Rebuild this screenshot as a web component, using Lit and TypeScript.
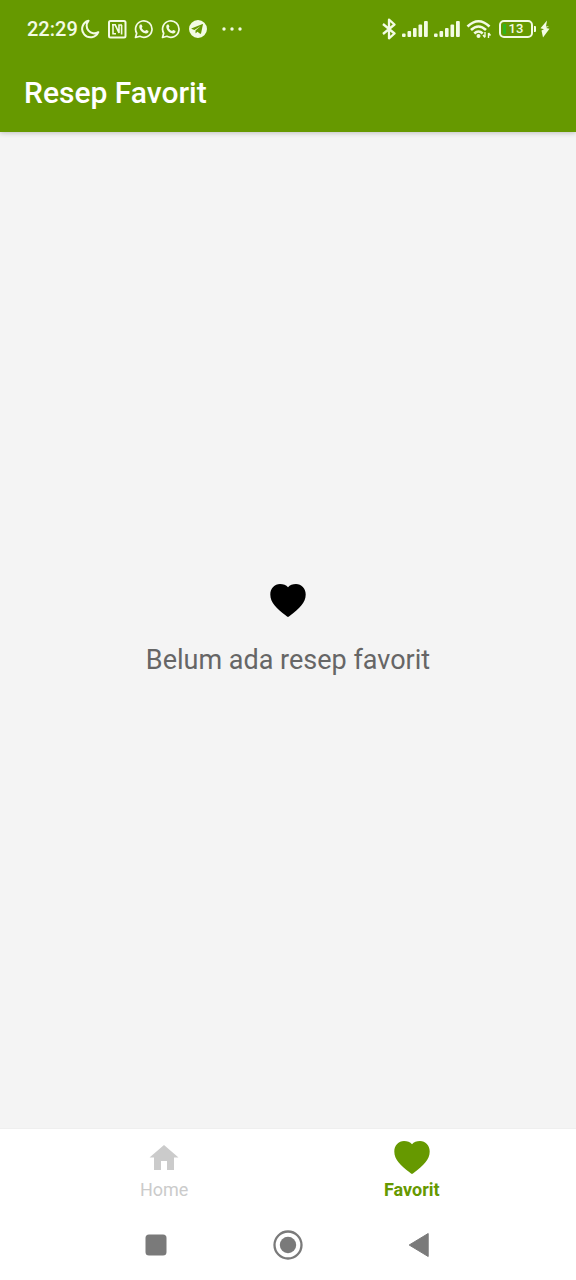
import { LitElement, html, css, svg } from "lit";
import { customElement, state } from "lit/decorators.js";

const heart = svg`<path d="M18 33C17.400 32.800 16.900 32.400 15.500 31.200C6.500 24.500 0.300 18.300 0.300 10.400C0.300 4.400 4.700 0 10 0C13.300 0 16.200 1 18 3.200C19.800 1 22.700 0 26 0C31.300 0 35.700 4.400 35.700 10.400C35.700 18.300 29.500 24.500 20.500 31.200C19.100 32.400 18.600 32.800 18 33Z" />`;

const whatsapp = html`<svg class="ico" width="20" height="20" viewBox="0 0 20 20" aria-label="WhatsApp">
  <path d="M1.500 18.500L2.700 14.200A8.200 8.200 0 1 1 5.900 17.300Z" fill="none" stroke="currentColor" stroke-width="1.700" stroke-linejoin="round" />
  <path d="M7 5.400C7.400 5.400 7.600 5.500 7.800 6L8.400 7.500C8.500 7.900 8.300 8.200 7.700 8.900C8.500 10.500 9.600 11.400 11.100 12C11.900 11 12.100 10.800 12.400 10.900L14.200 11.800C14.700 12.100 14.500 13 14.200 13.500C13.600 14.400 12.200 14.700 11 14.300C8.600 13.600 6.800 11.900 5.800 9.900C5 8.300 5.100 6.500 6.300 5.600C6.500 5.400 6.800 5.400 7 5.400Z" />
</svg>`;

const signal = html`<svg class="ico" width="26" height="18" viewBox="0 0 26 18" aria-label="Signal">
  <rect x="0" y="13.500" width="3.600" height="3.500" rx="1" />
  <rect x="5.500" y="11" width="3.600" height="6" rx="1" />
  <rect x="11" y="8" width="3.600" height="9" rx="1" />
  <rect x="16.500" y="4.500" width="3.600" height="12.500" rx="1" />
  <rect x="22" y="1" width="3.800" height="16" rx="1" />
</svg>`;

@customElement("status-bar")
class StatusBar extends LitElement {
  static styles = css`
    :host {
      display: flex;
      justify-content: space-between;
      align-items: center;
      height: 58px;
      padding: 0 26px 0 27px;
      color: #f3fbe4;
      font: 500 20px/24px Roboto, sans-serif;
    }
    .group { display: flex; align-items: center; gap: 7px; }
    .right { gap: 6px; }
    .clock { display: flex; align-items: center; gap: 2px; }
    .more { margin-left: 7px; }
    .ico { display: block; fill: currentColor; flex: none; }
    .power { display: flex; align-items: center; gap: 4px; }
    .battery {
      box-sizing: border-box;
      width: 34px;
      height: 18px;
      border: 2px solid currentColor;
      border-radius: 5px;
      background: linear-gradient(#2fb51c, #2fb51c) 2px 2px / 3px 10px no-repeat;
      font-size: 13px;
      line-height: 14px;
      text-align: center;
    }
    .cell { display: flex; align-items: center; }
    .cap { width: 2px; height: 6px; margin-left: 1px; border-radius: 0 1px 1px 0; background: currentColor; }
  `;

  render() {
    return html`
      <div class="group">
        <div class="clock">
          <span>22:29</span>
          <svg class="ico" width="20" height="20" viewBox="0 0 20 20" aria-label="Do not disturb">
            <path d="M8.500 1.800A8.400 8.400 0 1 0 18.300 13.200A7.600 7.600 0 0 1 8.500 1.800Z" fill="none" stroke="currentColor" stroke-width="2" stroke-linejoin="round" />
          </svg>
        </div>
        <svg class="ico" width="20" height="20" viewBox="0 0 20 20" aria-label="NFC">
          <rect x="2" y="2" width="16.500" height="16.500" rx="1.500" fill="none" stroke="currentColor" stroke-width="2" />
          <path d="M5 5.800H8.200L12 14V6H15M6 5.800V14.700H9M14.600 6V15.500" fill="none" stroke="currentColor" stroke-width="1.600" />
        </svg>
        ${whatsapp}${whatsapp}
        <svg class="ico" width="20" height="20" viewBox="0 0 20 20" aria-label="Telegram">
          <path fill-rule="evenodd" d="M10 1A9 9 0 1 0 10 19A9 9 0 0 0 10 1ZM14.900 5.500L13.100 14.300C13 14.900 12.600 15 12.100 14.700L9.400 12.700L8.100 14C7.800 14.300 7.500 14.200 7.500 13.800V11.400L12.700 6.900L6.400 10.900L3.800 10.100C3.300 9.900 3.300 9.500 3.900 9.200L14 5.200C14.500 5 15 5 14.900 5.500Z" />
        </svg>
        <svg class="ico more" width="20" height="4" viewBox="0 0 20 4" aria-label="More notifications">
          <circle cx="2" cy="2" r="1.700" /><circle cx="10" cy="2" r="1.700" /><circle cx="18" cy="2" r="1.700" />
        </svg>
      </div>
      <div class="group right">
        <svg class="ico" width="14" height="22" viewBox="0 0 14 22" aria-label="Bluetooth">
          <path d="M1 6L12.500 15.500L7 20.300V1.700L12.500 6.500L1 16" fill="none" stroke="currentColor" stroke-width="2.300" stroke-linejoin="round" />
        </svg>
        ${signal}${signal}
        <svg class="ico" width="27" height="20" viewBox="0 0 27 20" aria-label="Wi-Fi">
          <g fill="none" stroke="currentColor" stroke-width="2.600">
            <path d="M1.500 7.500Q12.500 -3 23.500 7.500" />
            <path d="M5 11Q12.500 4 20 11" />
            <path d="M8.300 14.500Q12.500 10.500 16.700 14.500" />
          </g>
          <circle cx="12.500" cy="17" r="2" />
          <path d="M19 13V18M17 16L19 18.500M22.500 19V14M22.500 14L24.500 16.500" fill="none" stroke="currentColor" stroke-width="1.400" />
        </svg>
        <div class="power">
          <div class="cell"><div class="battery">13</div><div class="cap"></div></div>
          <svg class="ico" width="10" height="18" viewBox="0 0 10 18" aria-label="Charging">
            <path d="M7 0.500L0.500 8.200L4 9.300L1.500 10.600L3 17.500L9.500 8.700L6 8L9 6.300L6 6.500Z" />
          </svg>
        </div>
      </div>
    `;
  }
}

@customElement("tab-bar")
class TabBar extends LitElement {
  @state() active = "favorit";

  static styles = css`
    :host {
      display: block;
      background: #fff;
      border-top: 1px solid #efefef;
    }
    .tabs { display: flex; padding: 0 7%; height: 82px; }
    .tab {
      flex: 1;
      display: flex;
      flex-direction: column;
      align-items: center;
      padding: 10px 0 0;
      gap: 2px;
      border: 0;
      background: none;
      color: #cbcbcb;
      font: 400 18px/22px Roboto, sans-serif;
      cursor: pointer;
    }
    .tab.active { color: #669900; font-weight: 700; }
    .icon { display: block; fill: currentColor; }
  `;

  render() {
    return html`<nav class="tabs">
      <button class="tab ${this.active === "home" ? "active" : ""}" @click=${() => (this.active = "home")}>
        <svg class="icon" width="36" height="38" viewBox="0 0 36 38" aria-hidden="true">
          <path d="M18 6L32.500 18.500H28V31H21V22H15V31H8V18.500H3.500Z" />
        </svg>
        <span>Home</span>
      </button>
      <button class="tab ${this.active === "favorit" ? "active" : ""}" @click=${() => (this.active = "favorit")}>
        <svg class="icon" width="36" height="38" viewBox="0 -2 36 38" aria-hidden="true">${heart}</svg>
        <span>Favorit</span>
      </button>
    </nav>`;
  }
}

@customElement("system-nav")
class SystemNav extends LitElement {
  static styles = css`
    :host { display: flex; padding: 19px 90px 20px; background: #fff; }
    .key {
      flex: 1;
      display: flex;
      align-items: center;
      justify-content: center;
      padding: 0;
      border: 0;
      background: none;
      color: #7a7a7a;
    }
    .glyph { display: block; fill: currentColor; }
  `;

  render() {
    return html`
      <button class="key" aria-label="Recent apps">
        <svg class="glyph" width="30" height="30" viewBox="0 0 30 30"><rect x="4.500" y="4.500" width="21" height="21" rx="3.500" /></svg>
      </button>
      <button class="key" aria-label="Home screen">
        <svg class="glyph" width="30" height="30" viewBox="0 0 30 30">
          <circle cx="15" cy="15" r="13.500" fill="none" stroke="currentColor" stroke-width="2.300" />
          <circle cx="15" cy="15" r="8.200" />
        </svg>
      </button>
      <button class="key" aria-label="Back">
        <svg class="glyph" width="30" height="30" viewBox="0 0 30 30">
          <path d="M23.200 3.500V26.500L4.200 15Z" stroke="currentColor" stroke-width="1" stroke-linejoin="round" />
        </svg>
      </button>
    `;
  }
}

@customElement("app-root")
class AppRoot extends LitElement {
  static styles = css`
    :host {
      display: flex;
      flex-direction: column;
      min-height: 100vh;
      background: #f4f4f4;
      font-family: Roboto, sans-serif;
    }
    .top { background: #669900; box-shadow: 0 1px 5px rgba(0, 0, 0, 0.22); }
    .title {
      margin: 0;
      padding: 15px 24px 19px;
      color: #fff;
      font-size: 30px;
      line-height: 40px;
      font-weight: 500;
    }
    .empty {
      flex: 1;
      display: flex;
      flex-direction: column;
      align-items: center;
      justify-content: center;
      gap: 26px;
    }
    .heart { display: block; fill: #000; }
    .message { margin: 0; color: #666; font-size: 27px; line-height: 34px; }
  `;

  render() {
    return html`
      <header class="top">
        <status-bar></status-bar>
        <h1 class="title">Resep Favorit</h1>
      </header>
      <main class="empty">
        <svg class="heart" width="36" height="33" viewBox="0 0 36 33" aria-hidden="true">${heart}</svg>
        <p class="message">Belum ada resep favorit</p>
      </main>
      <tab-bar></tab-bar>
      <system-nav></system-nav>
    `;
  }
}
